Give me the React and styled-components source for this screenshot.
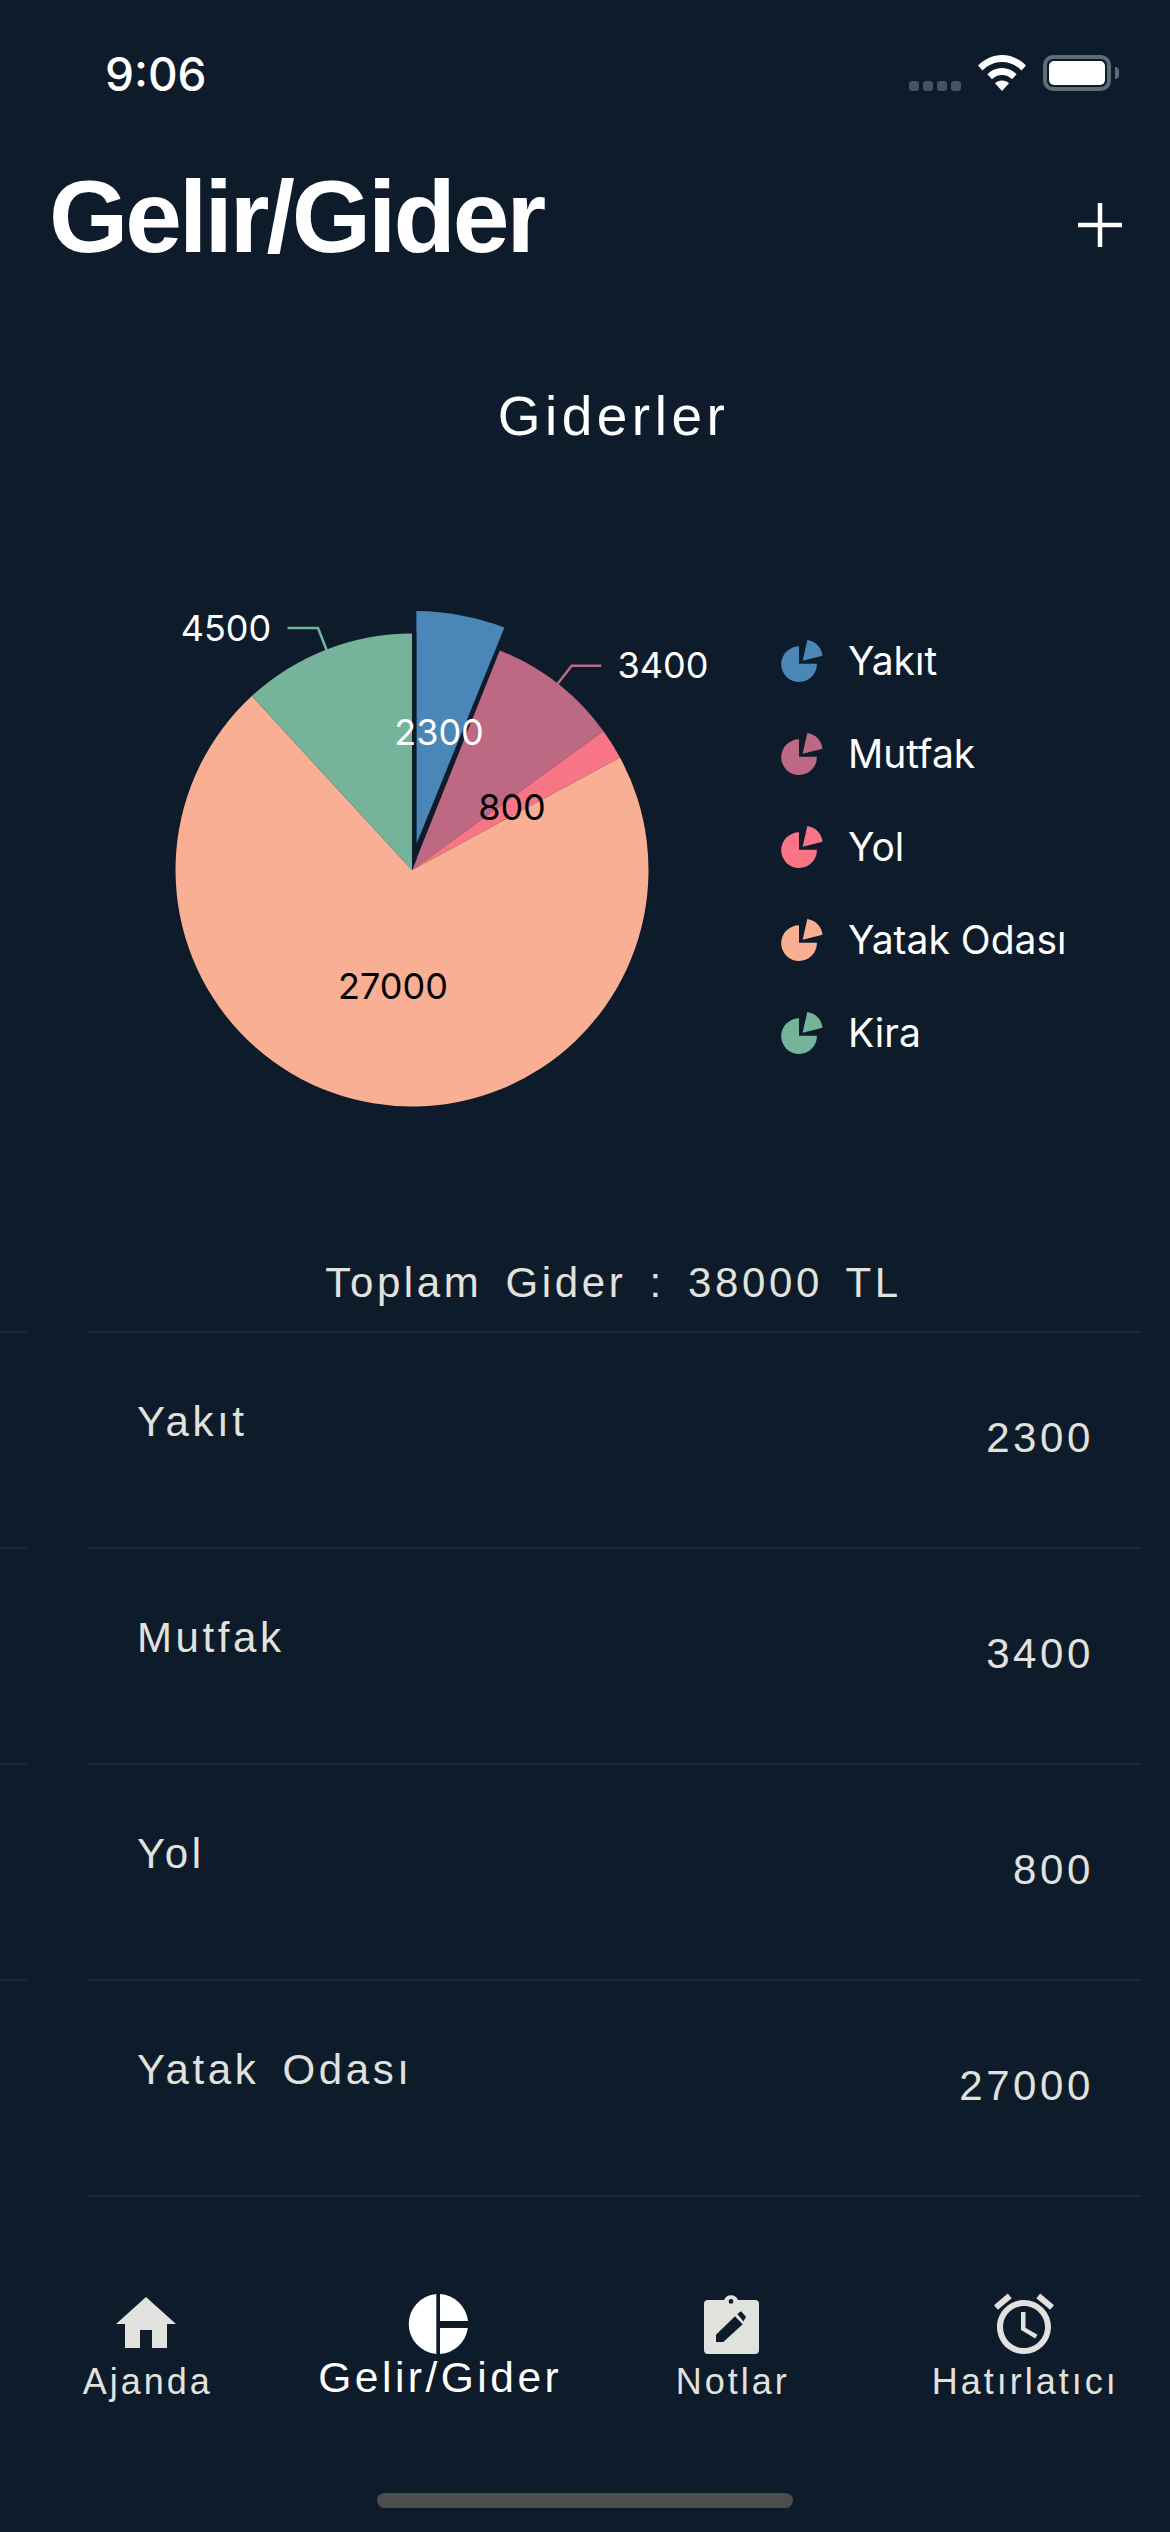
import React from "react";
import styled, { createGlobalStyle } from "styled-components";
import { MdHome, MdAlarm } from "react-icons/md";

const BG = "#0d1b2a";
const SOFT = "#e1e2de";
const LINE = "#1c2a39";
const SANS = '"Liberation Sans", Arial, sans-serif';
const INTER = 'Inter, "Liberation Sans", sans-serif';

const Global = createGlobalStyle`
  html, body { margin: 0; padding: 0; background: ${BG}; }
  * { box-sizing: border-box; }
`;

const Page = styled.div`
  width: 1170px;
  height: 2532px;
  overflow: hidden;
  background: ${BG};
  display: flex;
  flex-direction: column;
  font-family: ${SANS};
`;

const StatusBar = styled.div`
  height: 142px;
  flex: none;
  display: flex;
  align-items: flex-start;
  justify-content: space-between;
  padding: 46px 59px 0 105px;
`;
const Time = styled.div`
  font-family: ${INTER};
  font-weight: 500;
  font-size: 46px;
  line-height: 56px;
  color: #fff;
`;
const StatusIcons = styled.div`
  display: flex;
  align-items: flex-end;
  height: 38px;
  margin-top: 8px;
`;
const Dots = styled.div`
  display: flex;
  gap: 4px;
  margin-right: 17px;
  margin-bottom: 1px;
`;
const Dot = styled.span`
  width: 10px;
  height: 10px;
  border-radius: 3px;
  background: #46525f;
`;
const Wifi = styled.svg`
  width: 48px;
  height: 36px;
  margin-right: 17px;
  margin-bottom: 1px;
  display: block;
`;
const Battery = styled.div`
  position: relative;
  width: 68px;
  height: 36px;
  border: 4px solid #5f6b77;
  border-radius: 10px;
  padding: 2px;
  margin-bottom: 1px;
  &::before {
    content: "";
    display: block;
    width: 100%;
    height: 100%;
    background: #fff;
    border-radius: 5px;
  }
  &::after {
    content: "";
    position: absolute;
    right: -12px;
    top: 8px;
    width: 4px;
    height: 12px;
    border-radius: 0 4px 4px 0;
    background: #5f6b77;
  }
`;

const Header = styled.header`
  height: 150px;
  flex: none;
  display: flex;
  align-items: center;
  justify-content: space-between;
  padding: 0 48px 0 49px;
`;
const Title = styled.h1`
  margin: 0;
  font-size: 102px;
  line-height: 134px;
  font-weight: 700;
  letter-spacing: -3px;
  color: #fff;
`;
const AddButton = styled.svg`
  width: 44px;
  height: 44px;
  display: block;
  margin-top: 16px;
`;

const ChartTitle = styled.h2`
  margin: 0;
  padding: 93px 30px 0 87px;
  height: 298px;
  flex: none;
  text-align: center;
  font-size: 55px;
  line-height: 62px;
  font-weight: 400;
  letter-spacing: 4.5px;
  color: #fff;
`;
const ChartRow = styled.section`
  display: flex;
  height: 540px;
  flex: none;
  padding-left: 87px;
`;
const PieSvg = styled.svg`
  width: 690px;
  height: 540px;
  flex: none;
  display: block;
`;
const Legend = styled.ul`
  list-style: none;
  margin: 0;
  padding: 24px 0 0 4px;
`;
const LegendRow = styled.li`
  height: 93px;
  display: flex;
  align-items: center;
  gap: 25px;
  font-family: ${INTER};
  font-size: 39px;
  color: #fff;
`;
const LegendGlyph = styled.svg`
  width: 42px;
  height: 42px;
  display: block;
  flex: none;
  fill: ${(p) => p.$color};
`;

const Total = styled.div`
  flex: none;
  height: 201px;
  padding: 130px 30px 0 87px;
  text-align: center;
  font-size: 42px;
  line-height: 46px;
  letter-spacing: 3.6px;
  word-spacing: 8px;
  color: ${SOFT};
`;

const List = styled.div`
  flex: 1;
  min-height: 0;
  overflow: hidden;
  display: flex;
  flex-direction: column;
`;
const Row = styled.div`
  display: flex;
  height: 216px;
  flex: none;
`;
const Stub = styled.span`
  width: 27px;
  margin-right: 60px;
  flex: none;
  border-top: 2px solid ${(p) => (p.$hidden ? "transparent" : LINE)};
`;
const RowBody = styled.div`
  width: 1053px;
  flex: none;
  border-top: 2px solid ${LINE};
  display: flex;
  justify-content: space-between;
  padding: 0 46px 0 50px;
  font-size: 42px;
  letter-spacing: 3.6px;
  word-spacing: 8px;
  color: ${SOFT};
`;
const RowLabel = styled.span`
  margin-top: 65px;
  line-height: 48px;
`;
const RowValue = styled.span`
  align-self: center;
  line-height: 48px;
  margin-top: -4px;
`;

const TabBar = styled.nav`
  flex: none;
  height: 272px;
  display: grid;
  grid-template-columns: repeat(4, 1fr);
  position: relative;
  background: ${BG};
`;
const Tab = styled.div`
  display: flex;
  flex-direction: column;
  align-items: center;
  padding-top: 28px;
  color: ${(p) => (p.$active ? "#fff" : SOFT)};
`;
const IconSlot = styled.div`
  width: 72px;
  height: 72px;
  display: flex;
  align-items: center;
  justify-content: center;
  flex: none;
`;
const TabLabel = styled.span`
  font-size: ${(p) => (p.$active ? "42.5px" : "36px")};
  line-height: 44px;
  letter-spacing: ${(p) => (p.$active ? "3.5px" : "3px")};
  margin-top: ${(p) => (p.$active ? "-4px" : "0")};
  padding-left: 3px;
  white-space: nowrap;
`;
const HomeIndicator = styled.div`
  position: absolute;
  left: 377px;
  top: 233px;
  width: 416px;
  height: 15px;
  border-radius: 8px;
  background: #4d4d4d;
`;

const data = [
  { name: "Yakıt", value: 2300, color: "#4b86b9" },
  { name: "Mutfak", value: 3400, color: "#be6984" },
  { name: "Yol", value: 800, color: "#f87585" },
  { name: "Yatak Odası", value: 27000, color: "#f8af93" },
  { name: "Kira", value: 4500, color: "#75b39b" },
];

const CX = 412;
const CY = 870;
const R = 236.5;
const polar = (deg, r = R) => {
  const a = (deg * Math.PI) / 180;
  return [CX + r * Math.sin(a), CY - r * Math.cos(a)];
};
const slice = (a0, a1) => {
  const [x0, y0] = polar(a0);
  const [x1, y1] = polar(a1);
  const large = a1 - a0 > 180 ? 1 : 0;
  return `M${CX} ${CY} L${x0} ${y0} A${R} ${R} 0 ${large} 1 ${x1} ${y1} Z`;
};
const total = data.reduce((s, d) => s + d.value, 0);
let acc = 0;
const arcs = data.map((d) => {
  const a0 = (acc / total) * 360;
  acc += d.value;
  return { ...d, a0, a1: (acc / total) * 360 };
});

const PieLabel = styled.text`
  font-family: ${INTER};
  font-size: 36px;
  text-anchor: middle;
  dominant-baseline: central;
  fill: ${(p) => p.$fill};
`;

function Pie() {
  return (
    <PieSvg viewBox="87 590 690 540">
      {arcs.slice(1).map((d) => (
        <path key={d.name} d={slice(d.a0, d.a1)} fill={d.color} />
      ))}
      <path d="M416.4 844 L416.4 611 A259 259 0 0 1 504.4 627.5 Z" fill={data[0].color} />
      <path d="M412 870 L412 633 L416.4 633 L416.4 860 Z" fill={BG} />
      <path d="M287.6 628 H318 L327 651" fill="none" stroke={data[4].color} strokeWidth="2.5" />
      <path d="M601.3 665.7 H571.7 L557 684.5" fill="none" stroke={data[1].color} strokeWidth="2.5" />
      <PieLabel x="226" y="628" $fill="#fff">4500</PieLabel>
      <PieLabel x="663" y="665" $fill="#fff">3400</PieLabel>
      <PieLabel x="439" y="732" $fill="#fff">2300</PieLabel>
      <PieLabel x="512" y="807" $fill="#000">800</PieLabel>
      <PieLabel x="393" y="986" $fill="#000">27000</PieLabel>
    </PieSvg>
  );
}

function LegendIcon({ color }) {
  return (
    <LegendGlyph viewBox="0 0 126 127" $color={color}>
      <path d="M54 72 V19 A54 54 0 1 0 108 72 Z" />
      <path d="M65 63 L79 0 A54 54 0 0 1 125 48 Z" />
    </LegendGlyph>
  );
}

const PieTabGlyph = styled.svg`
  width: 61px;
  height: 60px;
  display: block;
  fill: currentColor;
`;
const NoteGlyph = styled.svg`
  width: 55px;
  height: 60px;
  display: block;
  fill: currentColor;
`;

function PieTabIcon() {
  return (
    <PieTabGlyph viewBox="0 0 61 60">
      <path d="M28.3 0.1 A30 30 0 0 0 28.3 59.9 Z" />
      <path d="M32 0.1 V27 H60 A30 30 0 0 0 32 0.1 Z" />
      <path d="M32 34 V59.9 A30 30 0 0 0 59.8 34 Z" />
    </PieTabGlyph>
  );
}

function NoteIcon() {
  return (
    <NoteGlyph viewBox="0 0 55 60">
      <path
        fillRule="evenodd"
        d="M4 6 H20 A7.5 7.5 0 0 1 34 6 H51 A4 4 0 0 1 55 10 V56 A4 4 0 0 1 51 60 H4 A4 4 0 0 1 0 56 V10 A4 4 0 0 1 4 6 Z
           M27 5 A2.4 2.4 0 1 0 27 9.8 A2.4 2.4 0 1 0 27 5 Z
           M12 48 V40.7 L31 22.3 L38.7 30.3 L19.3 48 Z
           M33.3 20 L37 17.3 L42 22.7 L39.5 27.5 Z"
      />
    </NoteGlyph>
  );
}

const tabs = [
  { label: "Ajanda", icon: <MdHome size={72} /> },
  { label: "Gelir/Gider", icon: <PieTabIcon />, active: true },
  { label: "Notlar", icon: <NoteIcon /> },
  { label: "Hatırlatıcı", icon: <MdAlarm size={72} /> },
];

export default function App() {
  return (
    <Page>
      <Global />
      <StatusBar>
        <Time>9:06</Time>
        <StatusIcons>
          <Dots>
            <Dot /><Dot /><Dot /><Dot />
          </Dots>
          <Wifi viewBox="0 0 48 36">
            <path fill="#fff" d="M24 0 C33 0 41 3.6 48 10.5 L43.5 15.5 C38 10 31.5 7 24 7 C16.5 7 10 10 4.5 15.5 L0 10.5 C7 3.6 15 0 24 0 Z" />
            <path fill="#fff" d="M24 13 C29.5 13 34.5 15.2 38.6 19.2 L34 24.2 C31.2 21.5 27.8 20 24 20 C20.2 20 16.8 21.5 14 24.2 L9.4 19.2 C13.5 15.2 18.5 13 24 13 Z" />
            <path fill="#fff" d="M24 25.5 C26.8 25.5 29 26.5 31 28.3 L24 36 L17 28.3 C19 26.5 21.2 25.5 24 25.5 Z" />
          </Wifi>
          <Battery />
        </StatusIcons>
      </StatusBar>
      <Header>
        <Title>Gelir/Gider</Title>
        <AddButton viewBox="0 0 44 44">
          <path d="M22 0 V44 M0 22 H44" stroke="#fff" strokeWidth="4.5" fill="none" />
        </AddButton>
      </Header>
      <ChartTitle>Giderler</ChartTitle>
      <ChartRow>
        <Pie />
        <Legend>
          {data.map((d) => (
            <LegendRow key={d.name}>
              <LegendIcon color={d.color} />
              {d.name}
            </LegendRow>
          ))}
        </Legend>
      </ChartRow>
      <Total>Toplam Gider : 38000 TL</Total>
      <List>
        {data.slice(0, 4).map((d) => (
          <Row key={d.name}>
            <Stub />
            <RowBody>
              <RowLabel>{d.name}</RowLabel>
              <RowValue>{d.value}</RowValue>
            </RowBody>
          </Row>
        ))}
        <Row>
          <Stub $hidden />
          <RowBody />
        </Row>
      </List>
      <TabBar>
        {tabs.map((t) => (
          <Tab key={t.label} $active={t.active}>
            <IconSlot>{t.icon}</IconSlot>
            <TabLabel $active={t.active}>{t.label}</TabLabel>
          </Tab>
        ))}
        <HomeIndicator />
      </TabBar>
    </Page>
  );
}
